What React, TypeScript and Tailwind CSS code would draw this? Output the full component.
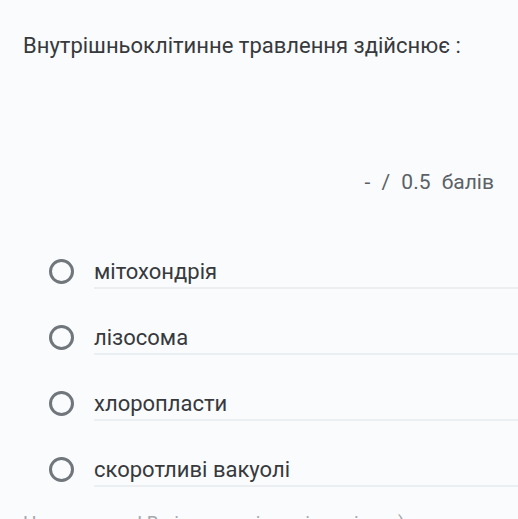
import React from "react";

const options = ["мітохондрія", "лізосома", "хлоропласти", "скоротливі вакуолі"];

export default function App() {
  return (
    <div
      className="h-[519px] w-[518px] overflow-hidden bg-[#f9fbfd]"
      style={{ fontFamily: "Roboto, 'Noto Sans', sans-serif" }}
    >
      <div className="pl-[23px] pt-[32px] text-[22px] leading-[28px] text-[#37393c]">
        Внутрішньоклітинне травлення здійснює :
      </div>
      <div className="mt-[108px] flex justify-end pr-[24px] text-[21px] leading-[28px] text-[#5b6166] [word-spacing:6px]">
        - / 0.5 балів
      </div>
      <div className="mt-[42px] flex flex-col">
        {options.map((o) => (
          <div key={o} className="flex h-[66px] items-center">
            <div className="ml-[49px] h-[25px] w-[25px] shrink-0 rounded-full border-[3px] border-[#70767b]" />
            <div className="ml-[20px] flex h-[36px] flex-1 items-center border-b-2 border-[#eceff2] pt-[2px] text-[22px] text-[#37393c]">
              {o}
            </div>
          </div>
        ))}
      </div>
      <div className="mt-[9px] pl-[23px] text-[19px] leading-[24px] text-[#a3a8ad]">
        Не виконано! Ви і можливість відповісти :)
      </div>
    </div>
  );
}
